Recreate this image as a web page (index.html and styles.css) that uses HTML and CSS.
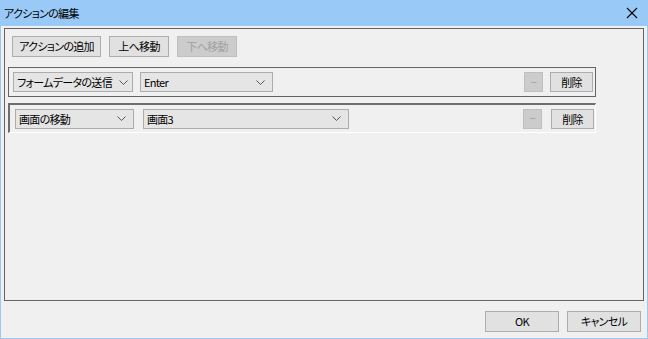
FILE: index.html
```html
<!DOCTYPE html>
<html lang="ja">
<head>
<meta charset="utf-8">
<link rel="stylesheet" href="styles.css">
</head>
<body>
<div class="window">
  <div class="titlebar">
    <span class="title">アクションの編集</span>
    <svg class="close" width="12" height="12" viewBox="0 0 12 12"><path d="M1 1L11 11M11 1L1 11" stroke="#000" stroke-width="1.1" fill="none"/></svg>
  </div>
  <div class="client">
    <div class="group">
      <div class="toolbar">
        <button class="btn w89">アクションの追加</button>
        <button class="btn w60">上へ移動</button>
        <button class="btn w60 disabled">下へ移動</button>
      </div>
      <div class="row flat">
        <div class="select s1"><span>フォームデータの送信</span><svg class="chev" width="9" height="5" viewBox="0 0 9 5"><path d="M0.5 0.5L4.5 4.5L8.5 0.5" stroke="#555" fill="none"/></svg></div>
        <div class="select s2"><span>Enter</span><svg class="chev" width="9" height="5" viewBox="0 0 9 5"><path d="M0.5 0.5L4.5 4.5L8.5 0.5" stroke="#555" fill="none"/></svg></div>
        <button class="btn minus disabled">−</button>
        <button class="btn del">削除</button>
      </div>
      <div class="row sunken">
        <div class="select s3"><span>画面の移動</span><svg class="chev" width="9" height="5" viewBox="0 0 9 5"><path d="M0.5 0.5L4.5 4.5L8.5 0.5" stroke="#555" fill="none"/></svg></div>
        <div class="select s4"><span>画面3</span><svg class="chev" width="9" height="5" viewBox="0 0 9 5"><path d="M0.5 0.5L4.5 4.5L8.5 0.5" stroke="#555" fill="none"/></svg></div>
        <button class="btn minus disabled">−</button>
        <button class="btn del">削除</button>
      </div>
    </div>
    <div class="footer">
      <button class="btn w74">OK</button>
      <button class="btn w74">キャンセル</button>
    </div>
  </div>
</div>
</body>
</html>
```
FILE: styles.css
```css
* { box-sizing: border-box; }
html, body { margin: 0; padding: 0; background: #f0f0f0; }
body {
  font-family: "Noto Sans CJK JP", "Noto Sans", sans-serif;
  font-size: 11px;
  font-feature-settings: "palt";
  letter-spacing: -0.7px;
  color: #000;
}
.window {
  width: 648px;
  height: 339px;
  display: flex;
  flex-direction: column;
  background: #f0f0f0;
}
.titlebar {
  height: 26px;
  background: #99c9f7;
  display: flex;
  align-items: center;
  justify-content: space-between;
  padding: 0 10px 0 4px;
}
.title { line-height: 16px; }
.close { display: block; margin-top: -1px; }
.client {
  flex: 1;
  border: 1px solid #99c9f7;
  border-top: none;
  display: flex;
  flex-direction: column;
  padding: 2px 3px 0 3px;
}
.group {
  height: 273px;
  border: 1px solid #646464;
  padding: 7px 3px 0 3px;
  display: flex;
  flex-direction: column;
}
.toolbar {
  display: flex;
  gap: 8px;
  padding-left: 4px;
  margin-bottom: 10px;
}
.btn {
  font-family: inherit;
  font-size: 11px;
  font-feature-settings: "palt";
  letter-spacing: -0.7px;
  height: 21px;
  padding: 0;
  background: #e1e1e1;
  border: 1px solid #adadad;
  color: #000;
  line-height: 19px;
  text-align: center;
  white-space: nowrap;
}
.btn.disabled {
  background: #cccccc;
  border-color: #bfbfbf;
  color: #a0a0a0;
}
.w89 { width: 89px; }
.w60 { width: 60px; }
.w74 { width: 74px; }
.row {
  width: 588px;
  height: 30px;
  display: flex;
  align-items: center;
}
.row.flat {
  border: 1px solid #646464;
  padding: 0 2px 0 4px;
  gap: 7px;
  margin-bottom: 6px;
}
.row.sunken {
  border-top: 2px solid #6e6e6e;
  border-left: 2px solid #6e6e6e;
  border-right: 1px solid #ffffff;
  border-bottom: 1px solid #ffffff;
  padding: 0 0 0 5px;
  gap: 9px;
}
.select {
  height: 20px;
  background: #e5e5e5;
  border: 1px solid #acacac;
  display: flex;
  align-items: center;
  justify-content: space-between;
  padding: 0 7px 0 3px;
  white-space: nowrap;
  overflow: hidden;
}
.select span { line-height: 18px; }
.chev { flex: none; margin-left: 3px; }
.s1 { width: 120px; padding-right: 4px; }
.s2 { width: 133px; }
.s3 { width: 119px; }
.s4 { width: 206px; }
.minus {
  width: 19px;
  height: 20px;
  margin-left: auto;
  line-height: 17px;
}
.del { width: 43px; height: 20px; line-height: 18px; }
.sunken .del { margin-right: 1px; }
.footer {
  display: flex;
  justify-content: flex-end;
  gap: 8px;
  padding: 10px 3px 0 0;
}
```
